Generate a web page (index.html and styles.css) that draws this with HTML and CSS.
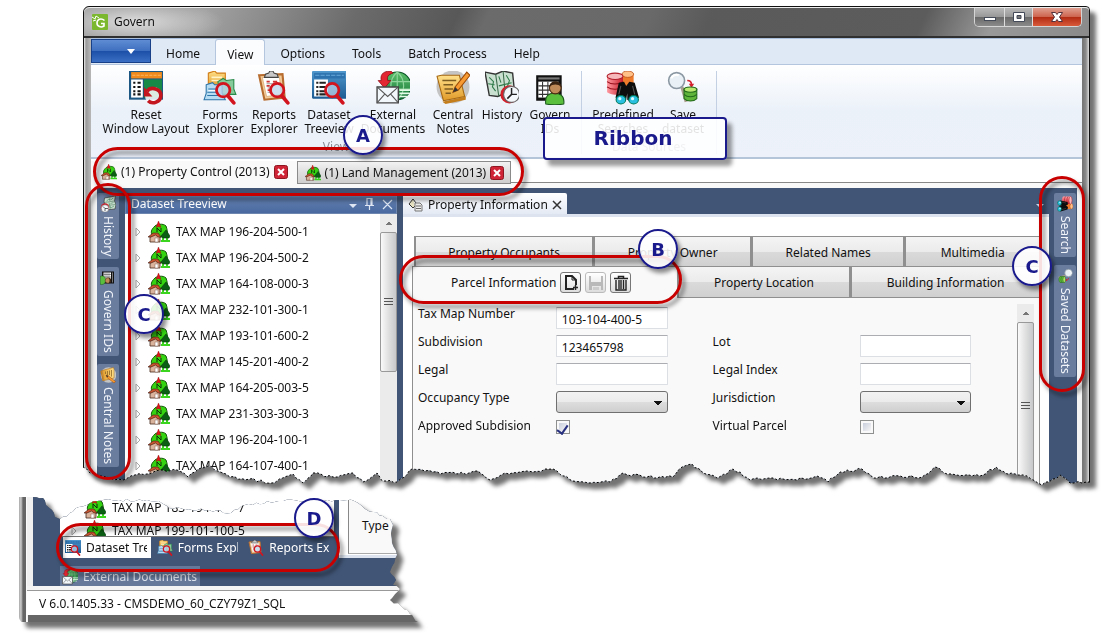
FILE: index.html
```html
<!DOCTYPE html>
<html lang="en">
<head>
<meta charset="utf-8">
<title>Govern</title>
<link rel="stylesheet" href="styles.css">
</head>
<body>
<svg class="defs" aria-hidden="true">
  <defs>
    <linearGradient id="gold" x1="0" y1="0" x2="0" y2="1"><stop offset="0" stop-color="#ffe08a"/><stop offset="1" stop-color="#e09a28"/></linearGradient>
    <linearGradient id="blue" x1="0" y1="0" x2="0" y2="1"><stop offset="0" stop-color="#4f97cc"/><stop offset="1" stop-color="#1c5b93"/></linearGradient>
    <linearGradient id="green" x1="0" y1="0" x2="0" y2="1"><stop offset="0" stop-color="#5cc06a"/><stop offset="1" stop-color="#14743a"/></linearGradient>
    <linearGradient id="redg" x1="0" y1="0" x2="1" y2="0"><stop offset="0" stop-color="#ff9aa2"/><stop offset="1" stop-color="#c8202c"/></linearGradient>
  </defs>
  <symbol id="i-lens" viewBox="0 0 32 32">
    <path d="M24 24l5 6" stroke="#d2141e" stroke-width="3.4" stroke-linecap="round"/>
    <circle cx="19" cy="18" r="6.3" fill="#bcd4ec" fill-opacity=".75" stroke="#d2141e" stroke-width="2.6"/>
  </symbol>
  <symbol id="i-reset" viewBox="0 0 32 32">
    <rect x="0" y="0" width="33" height="27" fill="#1c5683"/><rect x="2" y="1" width="29" height="6" fill="#f08a1c"/>
    <path d="M3 4h27" stroke="#fbb65e" stroke-dasharray="3 1"/><rect x="2" y="8" width="11" height="17" fill="#fff"/><rect x="14" y="8" width="17" height="17" fill="#178a48"/>
    <path d="M4 11h2m2 0h3M4 15h2m2 0h3M4 19h2m2 0h3M4 22h2m2 0h3" stroke="#111" stroke-width="2"/>
    <circle cx="23" cy="23" r="8" fill="#fff" fill-opacity=".85"/>
    <path d="M17 19c4-5 13-2 13 4s-8 9-12 5" fill="none" stroke="#c4161f" stroke-width="3.4"/><path d="M14 15v9h8z" fill="#c4161f"/>
  </symbol>
  <symbol id="i-forms" viewBox="0 0 32 32">
    <path d="M5 2l6-2 2 2h8v13H5z" fill="url(#gold)" stroke="#d07b12"/><path d="M8 6h10M8 9h10" stroke="#fff3c8" stroke-width="1.5"/>
    <path d="M14 10l5-3 3 2 7-1v9l2 5H16z" fill="#86c99a" stroke="#278a4a"/>
    <path d="M3 13l6-2 2 2h7v8l3 6H1l2-6z" fill="#b5dcf3" stroke="#2c73a8"/><path d="M5 17h9M4 20h11M4 23h12" stroke="#2c73a8"/><path d="M5 18.500h9" stroke="#fff"/>
    <use href="#i-lens"/>
  </symbol>
  <symbol id="i-reports" viewBox="0 0 32 32">
    <path d="M2 4l22-1 2 22-19 2z" fill="#f3cd9c" stroke="#b76d30" stroke-width="2"/><path d="M5 6l16-1 2 17-14 2z" fill="#fff" stroke="#d9a66d" stroke-width=".7"/>
    <path d="M7 6l1-3 3-1 1-2h3l1 2 3 1 1 3z" fill="#c8c8c8" stroke="#444"/><path d="M9 10h3m3 0h4M9 14h3M10 18h3" stroke="#c33" stroke-width="1.500"/><path d="M9 12h9M10 16h4M10 20h4" stroke="#999"/>
    <use href="#i-lens"/>
  </symbol>
  <symbol id="i-tree" viewBox="0 0 32 32">
    <rect x="0" y="0" width="33" height="26" rx="1" fill="url(#blue)"/><rect x="2" y="2" width="29" height="5" fill="#2d71ad"/><path d="M3 4h27" stroke="#68aadb" stroke-dasharray="4 1"/>
    <rect x="2" y="8" width="13" height="16" fill="#fff"/><path d="M4 11h2m1 0h6M4 15h2m1 0h6M4 19h2m1 0h6M4 22h2m1 0h6" stroke="#222" stroke-width="2"/>
    <use href="#i-lens"/>
  </symbol>
  <symbol id="i-ext" viewBox="0 0 32 32">
    <circle cx="20" cy="14" r="13" fill="url(#green)" stroke="#0a5528"/><path d="M20 1c-8 7-8 19 0 26 8-7 8-19 0-26zM8 10h24M7 17h26M20 1v26" fill="none" stroke="#8fd49c" stroke-width="1.100"/>
    <path d="M22 18h11M22 21h10M22 24h8" stroke="#e6fbe8" stroke-width="1.600"/>
    <path d="M14 0C5 0 4 5 5 9H2l6 7 6-7h-3c-1-4 1-6 5-7z" fill="#e22632" stroke="#8c0a14" stroke-width=".7"/>
    <path d="M1 15h20v15H1z" fill="#f2f7fb" stroke="#444" stroke-width="1.300"/><path d="M1 15l10 9 10-9M1 30l7-8M21 30l-7-8" fill="none" stroke="#555"/>
  </symbol>
  <symbol id="i-notes" viewBox="0 0 32 32">
    <circle cx="16" cy="15" r="15.500" fill="#c4c4c4"/>
    <path d="M1 5l4-1 17 0 5 20-20 4z" fill="url(#gold)" stroke="#a66812"/><path d="M6 29l22-5v3L9 31z" fill="#c47e1c"/>
    <path d="M6 9h13M7 13h9M8 17h8M9 21h5" stroke="#7d5c22" stroke-width="1.400"/>
    <path d="M29 1l3 3-11 14-5 2 2-5z" fill="#f79a31" stroke="#9c4b08"/><path d="M18 15l3 3-5 2z" fill="#333"/>
  </symbol>
  <symbol id="i-history" viewBox="0 0 32 32">
    <path d="M0 1l10 2 7-3 9 2 2 20-9-1-7 3-8-1z" fill="#c9dfcf" stroke="#333" stroke-width="1.300"/><path d="M10 3l3 21M17 0l2 21" stroke="#3b6b4a"/>
    <path d="M4 6l4 4-1 5 3 4M13 5l2 6M20 4l3 5-2 6M3 12l6 1M13 14l12-3" fill="none" stroke="#2e7a48"/>
    <circle cx="23" cy="22" r="8.500" fill="#d4202b"/><circle cx="25" cy="22" r="7.500" fill="#f4f8fb" stroke="#666"/><path d="M25 16v6h5M25 22l-4 4" fill="none" stroke="#222" stroke-width="1.400"/>
  </symbol>
  <symbol id="i-ids" viewBox="0 0 32 32">
    <path d="M3 4h24v24H3z" fill="#111"/><path d="M5 6h20v2H5z" fill="#777"/><path d="M5 10h19v15H5z" fill="#fff"/><path d="M5 14h19M5 18h19M5 22h19M9 10v15M14 10v15M19 10v15" stroke="#333"/>
    <path d="M12 31c-1-8 3-10 8-10s10 2 9 10c-4 1-13 1-17 0z" fill="#5bbf3e" stroke="#1c5a1c"/><circle cx="21" cy="16" r="5.500" fill="#bf8a58" stroke="#4a2a10"/><path d="M15.500 15c0-7 11-7 11 0-3-3-8-3-11 0z" fill="#3b2412"/>
  </symbol>
  <symbol id="i-search" viewBox="0 0 32 32">
    <path d="M15 3v12h11V3z" fill="#ee7c2c"/><ellipse cx="20.500" cy="3" rx="5.500" ry="3" fill="#ffc188" stroke="#b8480c" stroke-width=".7"/>
    <path d="M1 5v15c4 3 11 3 15 0V5z" fill="url(#redg)"/><ellipse cx="8.500" cy="5" rx="7.500" ry="3" fill="#f7b8bc" stroke="#b01c28"/><path d="M1 10c4 3 11 3 15 0M1 15c4 3 11 3 15 0" fill="none" stroke="#96101c"/>
    <path d="M12 11l5-1 2 4 3-4 5 1 4 14-6 5-5-3v-6l-1 6-6 4-4-6z" fill="#0d0d0d"/><path d="M14 14l-2 8m13-8l2 8" stroke="#555"/>
    <ellipse cx="14" cy="27" rx="4.500" ry="4" fill="#28bfe0" stroke="#075"/><ellipse cx="26" cy="27" rx="4.500" ry="4" fill="#28bfe0" stroke="#075"/><circle cx="13" cy="26" r="1.500" fill="#d9faff"/><circle cx="25" cy="26" r="1.500" fill="#d9faff"/>
  </symbol>
  <symbol id="i-save" viewBox="0 0 32 32">
    <path d="M15 15l4 14" stroke="#a89c8a" stroke-width="3"/><circle cx="10" cy="9" r="7.500" fill="#e9f1f6" stroke="#8b98a3" stroke-width="1.500"/><path d="M5 7c1-3 4-4 7-3" stroke="#fff" stroke-width="2" fill="none"/>
    <path d="M20 9c3 0 4 1 4 4" fill="none" stroke="#d4202b" stroke-width="1.500"/><path d="M21.500 12h5L24 16z" fill="#d4202b"/>
    <path d="M17 17v9c3 3 9 3 12 0v-9z" fill="#5fb53a" stroke="#236a1a"/><ellipse cx="23" cy="17.500" rx="6" ry="2.500" fill="#b8e86e" stroke="#236a1a"/><path d="M17 22c3 3 9 3 12 0" fill="none" stroke="#236a1a"/>
  </symbol>
  <symbol id="i-house" viewBox="0 0 22 22">
    <path d="M4 14C2 10 5 7 6 6c2-3 9-4 12-1 1 3 2 6 1 11H5z" fill="#35d411" stroke="#14570a"/>
    <path d="M10.500 0l2.500 6.500-2.500-1-2.500 1z" fill="#e3161b" stroke="#8c0a0a" stroke-width=".4"/><path d="M9 11V7l4 4V7" fill="none" stroke="#0b2e06" stroke-width="1"/>
    <path d="M15 15v6M19 14v7M13 20h9" stroke="#3bd520" stroke-width="2"/>
    <path d="M18 9l4 6-1 2h-6l-2-2z" fill="#0b5e14" stroke="#063c0d" stroke-width=".6"/>
    <path d="M2 16l5-3 5 3v5H2z" fill="#d9b39c" stroke="#462a1c" stroke-width=".8"/><path d="M0 16l5-4h5l3 4h-3l-2.500-2L3 16z" fill="#c8552f" stroke="#3d1a10" stroke-width=".6"/><path d="M7 17h3v4H7z" fill="#fff" stroke="#8c6a58" stroke-width=".5"/>
  </symbol>
  <symbol id="i-closered" viewBox="0 0 14 14"><rect x=".5" y=".5" width="13" height="13" rx="2" fill="#cf2436" stroke="#8d1620"/><path d="M4 4l6 6M10 4l-6 6" stroke="#fff" stroke-width="2"/></symbol>
  <symbol id="i-tri" viewBox="0 0 6 10"><path d="M1 1l4 4-4 4z" fill="#fff" stroke="#aaa"/></symbol>
</svg>

<figure class="shot main">
  <div class="shadow">
    <div class="window" data-tear="bottom">
      <header class="title">
        <svg class="logo" viewBox="0 0 16 16"><rect width="16" height="16" rx="1" fill="#7cb82f"/><path d="M0 3l3 2 1-3 3 2M1 7l3-1" stroke="#fff" fill="none"/><path d="M12.500 6.500C9 3.500 5 5.500 5 9s4 5 7 3V9.500H9" fill="none" stroke="#fff" stroke-width="1.600"/></svg>
        <h1>Govern</h1>
        <div class="caption">
          <button aria-label="Minimize"><svg viewBox="0 0 14 12"><rect x="1.500" y="6.500" width="11" height="3" fill="#fff" stroke="#444a58"/></svg></button>
          <button aria-label="Maximize"><svg viewBox="0 0 14 12"><path d="M1.500 1.500h11v9h-11z" fill="#fff" stroke="#444a58"/><path d="M5 4.500h4v3H5z" fill="#777" stroke="#444a58"/></svg></button>
          <button class="x" aria-label="Close"><svg viewBox="0 0 14 12"><path d="M1.500 1.500h4L7 3.500l1.500-2h4L9.500 6l3 4.500h-4L7 8.500l-1.500 2h-4l3-4.500z" fill="#fff" stroke="#54303a"/></svg></button>
        </div>
      </header>
      <div class="client">
        <nav class="menu">
          <button class="app" aria-label="Application menu"><svg viewBox="0 0 8 5"><path d="M0 0h8L4 5z" fill="#fff"/></svg></button>
          <button>Home</button><button class="on">View</button><button>Options</button><button>Tools</button><button>Batch Process</button><button>Help</button>
        </nav>
        <div class="ribbon">
          <section class="group views">
            <div class="tools">
              <button><svg><use href="#i-reset"/></svg>Reset<br>Window Layout</button>
              <button><svg><use href="#i-forms"/></svg>Forms<br>Explorer</button>
              <button><svg><use href="#i-reports"/></svg>Reports<br>Explorer</button>
              <button><svg><use href="#i-tree"/></svg>Dataset<br>Treeview</button>
              <button><svg><use href="#i-ext"/></svg>External<br>Documents</button>
              <button><svg><use href="#i-notes"/></svg>Central<br>Notes</button>
              <button><svg><use href="#i-history"/></svg>History</button>
              <button><svg><use href="#i-ids"/></svg>Govern<br>IDs</button>
            </div>
            <h2>View</h2>
          </section>
          <section class="group sources">
            <div class="tools">
              <button><svg><use href="#i-search"/></svg>Predefined<br>Searches</button>
              <button><svg><use href="#i-save"/></svg>Save<br>dataset</button>
            </div>
            <h2>Data Sources</h2>
          </section>
        </div>
        <div class="docs">
          <div class="doc on"><svg class="s16"><use href="#i-house"/></svg><span>(1) Property Control (2013)</span><button aria-label="Close tab"><svg><use href="#i-closered"/></svg></button></div>
          <div class="doc"><svg class="s16"><use href="#i-house"/></svg><span>(1) Land Management (2013)</span><button aria-label="Close tab"><svg><use href="#i-closered"/></svg></button></div>
        </div>
        <div class="work">
          <aside class="dock left">
            <button><svg><use href="#i-history"/></svg>History</button>
            <button><svg><use href="#i-ids"/></svg>Govern IDs</button>
            <button><svg><use href="#i-notes"/></svg>Central Notes</button>
          </aside>
          <section class="tree">
            <header><h2>Dataset Treeview</h2>
              <svg viewBox="0 0 44 14"><path d="M0 7h8l-4 4z" fill="#dfe7f5"/><path d="M18 1.500h5v7h-5zM22 2v6M16 8.500h9M20.500 9v4M34 3l9 9M43 3l-9 9" fill="none" stroke="#dfe7f5" stroke-width="1.200"/></svg></header>
            <div class="scroller">
              <ul>
                <li><svg class="tw"><use href="#i-tri"/></svg><svg class="s22"><use href="#i-house"/></svg>TAX MAP 196-204-500-1</li>
                <li><svg class="tw"><use href="#i-tri"/></svg><svg class="s22"><use href="#i-house"/></svg>TAX MAP 196-204-500-2</li>
                <li><svg class="tw"><use href="#i-tri"/></svg><svg class="s22"><use href="#i-house"/></svg>TAX MAP 164-108-000-3</li>
                <li><svg class="tw"><use href="#i-tri"/></svg><svg class="s22"><use href="#i-house"/></svg>TAX MAP 232-101-300-1</li>
                <li><svg class="tw"><use href="#i-tri"/></svg><svg class="s22"><use href="#i-house"/></svg>TAX MAP 193-101-600-2</li>
                <li><svg class="tw"><use href="#i-tri"/></svg><svg class="s22"><use href="#i-house"/></svg>TAX MAP 145-201-400-2</li>
                <li><svg class="tw"><use href="#i-tri"/></svg><svg class="s22"><use href="#i-house"/></svg>TAX MAP 164-205-003-5</li>
                <li><svg class="tw"><use href="#i-tri"/></svg><svg class="s22"><use href="#i-house"/></svg>TAX MAP 231-303-300-3</li>
                <li><svg class="tw"><use href="#i-tri"/></svg><svg class="s22"><use href="#i-house"/></svg>TAX MAP 196-204-100-1</li>
                <li><svg class="tw"><use href="#i-tri"/></svg><svg class="s22"><use href="#i-house"/></svg>TAX MAP 164-107-400-1</li>
              </ul>
              <div class="bar"><i class="up"></i><div class="thumb short"><i class="grip"></i></div></div>
            </div>
          </section>
          <section class="property">
            <header>
              <div class="ptab"><svg viewBox="0 0 16 14"><path d="M5 1L1 6l4 4 2-2M5 1l3 4" fill="#e8e4c4" stroke="#333"/><path d="M7 5h5l2 2v6H7z" fill="#eee" stroke="#777"/><path d="M8 8h5M8 10.500h5" stroke="#666"/></svg><h2>Property Information</h2><svg class="cx" viewBox="0 0 10 10"><path d="M1 1l8 8M9 1L1 9" stroke="#333" stroke-width="1.500"/></svg></div>
              <i class="drop"></i>
            </header>
            <div class="sheet">
              <div class="strip one"><button>Property Occupants</button><button>Property Owner</button><button>Related Names</button><button>Multimedia</button></div>
              <div class="strip two">
                <div class="current"><span>Parcel Information</span>
                  <button aria-label="New"><svg viewBox="0 0 16 16"><path d="M11 14H3V1h6l4 4v5" fill="none" stroke="#222" stroke-width="2"/><path d="M9 1v4h4" fill="none" stroke="#222"/><path d="M12.500 10v5M10 12.500h5" stroke="#222" stroke-width="1.500"/></svg></button>
                  <button class="off" aria-label="Save"><svg viewBox="0 0 16 16"><path d="M1 1h2v6h10V1h2v14h-2v-4H4v4H1z" fill="#b9b9b9"/><path d="M5 15v-3h6v3" fill="#ccc"/></svg></button>
                  <button aria-label="Delete"><svg viewBox="0 0 16 16"><path d="M1 3.500h14M5.500 3V1.500h5V3" fill="none" stroke="#222" stroke-width="1.500"/><path d="M3 5v10h10V5M6 5v9M8 5v9M10.500 5v9" fill="none" stroke="#222" stroke-width="1.400"/></svg></button>
                </div>
                <button>Property Location</button><button>Building Information</button>
              </div>
              <div class="panel">
                <form class="form">
                  <label for="tax">Tax Map Number</label><input id="tax" type="text" value="103-104-400-5"><i></i><i></i>
                  <label for="sub">Subdivision</label><input id="sub" type="text" value="123465798"><label for="lot">Lot</label><input id="lot" type="text">
                  <label for="legal">Legal</label><input id="legal" type="text"><label for="lidx">Legal Index</label><input id="lidx" type="text">
                  <label for="occ">Occupancy Type</label><select id="occ"><option></option></select><label for="jur">Jurisdiction</label><select id="jur"><option></option></select>
                  <label for="app">Approved Subdision</label><input id="app" type="checkbox" checked><label for="vir">Virtual Parcel</label><input id="vir" type="checkbox">
                </form>
                <div class="bar"><i class="up"></i><div class="thumb"><i class="grip"></i></div></div>
              </div>
            </div>
          </section>
          <aside class="dock right">
            <button><svg><use href="#i-search"/></svg>Search</button>
            <button><svg><use href="#i-save"/></svg>Saved Datasets</button>
          </aside>
        </div>
      </div>
    </div>
  </div>
  <div class="ring ring-a"></div><div class="ring ring-b"></div><div class="ring ring-c1"></div><div class="ring ring-c2"></div>
  <b class="dot dot-a">A</b><b class="dot dot-b">B</b><b class="dot dot-c1">C</b><b class="dot dot-c2">C</b>
  <figcaption class="plate">Ribbon</figcaption>
</figure>

<figure class="shot part">
  <div class="shadow">
    <div class="window low" data-tear="corner">
      <div class="lowwork">
        <div class="lowtree">
          <ul>
            <li><svg class="tw"></svg><svg class="s22"><use href="#i-house"/></svg>TAX MAP 183-194-400-7</li>
            <li><svg class="tw"><use href="#i-tri"/></svg><svg class="s22"><use href="#i-house"/></svg>TAX MAP 199-101-100-5</li>
          </ul>
          <nav>
            <button class="on"><svg class="s16"><use href="#i-tree"/></svg><span>Dataset Treeview</span></button>
            <button><svg class="s16"><use href="#i-forms"/></svg><span>Forms Explorer</span></button>
            <button><svg class="s16"><use href="#i-reports"/></svg><span>Reports Explorer</span></button>
          </nav>
        </div>
        <div class="lowpane"><div>Type</div></div>
        <div class="lowdock"><button><svg class="s16"><use href="#i-ext"/></svg>External Documents</button></div>
      </div>
      <footer>V 6.0.1405.33 - CMSDEMO_60_CZY79Z1_SQL</footer>
    </div>
  </div>
  <div class="ring ring-d"></div><b class="dot dot-d">D</b>
</figure>
<script src="tear.js"></script>
</body>
</html>
```

FILE: styles.css
```css
* { box-sizing: border-box; }
body { margin: 0; min-height: 100vh; background: #fff; color: #111; font: 12px/14px "Noto Sans", "Open Sans", sans-serif; }
button, input, select { font: inherit; color: inherit; margin: 0; }
button { border: 0; padding: 0; background: none; white-space: nowrap; }
h1, h2, ul, figure { margin: 0; padding: 0; font: inherit; }
ul { list-style: none; }
svg { flex: none; display: block; }
.defs { position: absolute; width: 0; height: 0; }
.s16 { width: 16px; height: 16px; }
.s22 { width: 22px; height: 22px; }

body { display: flex; flex-direction: column; gap: 7px; padding: 6px 0 8px; }
.shot { position: relative; }
.main { margin: 0 16px 0 83px; }
.shadow { filter: drop-shadow(6px 6px 2px rgba(0, 0, 0, .55)); position: relative; }
.window { border: 1px solid #111; border-radius: 6px 4px 0 0; padding: 0 7px 0 7px; background: linear-gradient(90deg, #eee 0, #999 2px, #b4b4b4 6px, #bbb 40%, #777 calc(100% - 6px), #8d8d8d calc(100% - 3px), #ddd 100%); }
.edge { position: absolute; inset: 0; width: 100%; height: 100%; overflow: visible; fill: none; stroke: #000; stroke-dasharray: 2 2; }

.title { display: flex; align-items: center; height: 31px; margin: 0 -7px; padding: 0 7px 0 8px; gap: 6px; border-top: 1px solid #eee; border-bottom: 2px solid #303030; border-radius: 6px 4px 0 0; background: radial-gradient(ellipse 90px 22px at 50px 14px, #ddd 0, rgba(200, 200, 200, 0) 100%), linear-gradient(115deg, #999 0, #a2a2a2 12%, #858585 20%, #6b6b6b 27%, #585858 37%, #6b6b6b 40%, #696969 56%, #5a5a5a 62%, #5c5c5c 83%, #999 90%, #8a8a8a 100%); }
.logo { width: 16px; height: 16px; }
.title h1 { flex: 1; }
.caption { display: flex; align-self: flex-start; border: 1px solid #d5d5d5; border-top: 0; border-radius: 0 0 5px 5px; overflow: hidden; }
.caption button { width: 30px; height: 18px; display: grid; place-items: center; border-right: 1px solid #ddd; background: linear-gradient(#b9b9b9, #999 48%, #686868 50%, #8a8a8a); }
.caption button + button { width: 28px; }
.caption button.x { width: 48px; border: 0; background: linear-gradient(#e0a090, #cd6550 48%, #b12a12 50%, #d8593a); }
.caption svg { width: 14px; height: 12px; }

.client { background: #fff; }
.menu { display: flex; align-items: flex-end; gap: 3px; height: 27px; background: #dfe8f5; border-top: 1px solid #a9bfdc; border-bottom: 1px solid #b4c6de; }
.menu button { height: 25px; padding: 4px 11px 0; border: 1px solid transparent; border-bottom: 0; }
.menu .on { height: 26px; margin-bottom: -1px; background: #fbfcfe; border-color: #b4c6de; border-radius: 3px 3px 0 0; }
.menu .app { width: 60px; height: 24px; align-self: flex-start; display: grid; place-items: center; padding: 0 0 0 20px; border: 1px solid #174089; background: linear-gradient(#5f8cd3, #3f70c0 48%, #1d50a8 52%, #3a6fc4); }
.app svg { width: 8px; height: 5px; }
.ribbon { display: flex; height: 94px; padding: 6px 0 3px 12px; background: linear-gradient(#fff, #ebf1f9 50%, #ecf1fa); border-bottom: 2px solid #b4c4d9; }
.group { display: grid; grid-template-rows: 1fr auto; padding-right: 12px; border-right: 1px solid #c3cfe2; }
.sources { padding: 0 11px; }
.tools { display: grid; gap: 8px; align-items: start; }
.views .tools { grid-template-columns: 86px 46px 46px 48px 64px 40px 42px 38px; }
.sources .tools { grid-template-columns: 60px 44px; }
.tools button { margin: 0 -10px; text-align: center; }
.tools button svg { width: 34px; height: 34px; margin: 0 auto 3px; overflow: visible; }
.group h2 { text-align: center; color: #8a8f98; }
.docs { display: flex; align-items: flex-start; height: 29px; padding-top: 2px; background: linear-gradient(#fff 23px, #888 23px, #888 24px, #f9f9f9 24px); }
.doc { display: flex; align-items: center; gap: 4px; height: 23px; padding: 1px 6px 0 7px; border: 1px solid #8a8a8a; background: linear-gradient(#f2f2f2, #dedede 50%, #cfcfcf); }
.doc.on { height: 25px; border: 0; padding: 0 9px 3px 10px; background: #f9f9f9; }
.doc button, .doc button svg { width: 14px; height: 14px; }

.work { display: flex; background: #415576; min-height: 301px; }
.dock { display: flex; flex-direction: column; align-items: flex-start; gap: 8px; padding-top: 5px; }
.dock.left { width: 34px; border-left: 6px solid #f4f4f4; }
.dock.right { width: 33px; padding-left: 5px; border-right: 5px solid #f4f4f4; }
.dock button { writing-mode: vertical-rl; display: flex; align-items: center; gap: 4px; width: 22px; padding: 3px 0 3px; line-height: 18px; color: #f2f5fa; background: #6a7d9f; border-radius: 2px; }
.dock svg { width: 16px; height: 16px; transform: rotate(90deg); }

.tree { width: 272px; flex: none; margin-top: 5px; display: flex; flex-direction: column; }
.tree header { display: flex; align-items: center; height: 21px; padding: 0 3px 0 5px; color: #fff; background: linear-gradient(#6683b0, #4a69a0); border: 1px solid #6d86b0; }
.tree header h2 { flex: 1; }
.tree header svg { width: 44px; height: 14px; }
.scroller { display: flex; flex: 1; background: #fff; }
.scroller ul { flex: 1; padding-top: 5px; }
li { display: flex; align-items: center; height: 26px; white-space: nowrap; }
.tw { width: 6px; height: 10px; margin: 0 7px 0 10px; }
li .s22 { margin-right: 6px; }
.bar { width: 17px; display: flex; flex-direction: column; background: #ebebeb; }
.up { height: 18px; background: conic-gradient(from 135deg at 50% 0, #777 90deg, transparent 0) center / 8px 4px no-repeat; }
.thumb { flex: 1; display: grid; place-items: center; border: 1px solid #999; border-radius: 2px; background: linear-gradient(90deg, #fafafa, #e0e0e0 50%, #c6c8ca); }
.short { flex: none; height: 140px; }
.grip { width: 9px; height: 8px; background: repeating-linear-gradient(#555 0 1px, transparent 1px 3px); }

.property { flex: 1; margin: 5px 0 0 6px; display: flex; flex-direction: column; min-width: 0; }
.property header { display: flex; justify-content: space-between; height: 21px; }
.ptab { display: flex; align-items: center; gap: 4px; padding: 2px 5px 0; background: linear-gradient(#fff, #e4eaf4); border-radius: 2px 2px 0 0; }
.ptab svg { width: 16px; height: 14px; }
.ptab .cx { width: 10px; height: 10px; }
.drop { align-self: center; margin: 4px 5px 0 0; border: 4px solid transparent; border-top-color: #cdd6e6; border-bottom: 0; }
.sheet { flex: 1; display: flex; flex-direction: column; padding: 19px 9px 0; background: #fff; border-top: 3px solid #dde4ef; }
.strip { display: grid; }
.strip > button { border: 1px solid #8f8f8f; border-left-width: 2px; background: linear-gradient(#f4f4f4, #ebebeb 50%, #dadada 51%, #d0d0d0); }
.one { grid-template-columns: 180fr 158fr 154fr 136fr; height: 30px; margin-left: 2px; }
.one > button { border-bottom: 0; padding-top: 2px; }
.two { grid-template-columns: 265fr 174fr 190fr; height: 32px; }
.two > button { padding-top: 2px; }
.current { display: flex; align-items: center; gap: 4px; padding: 0 0 0 38px; background: #f9f9f9; border: 1px solid #8f8f8f; border-bottom: 0; border-right: 0; white-space: nowrap; }
.current button { width: 21px; height: 21px; display: grid; place-items: center; border: 1px solid #777; border-radius: 3px; background: linear-gradient(#fff, #ddd); }
.current .off { border-color: #bbb; }
.current svg { width: 16px; height: 16px; }
.panel { flex: 1; display: flex; padding: 6px 5px 0 5px; background: #f9f9f9; border: solid #8f8f8f; border-width: 0 1px; }
.form { flex: 1; display: grid; grid-template-columns: minmax(100px, 138fr) minmax(60px, 112fr) minmax(100px, 193fr) minmax(60px, 111fr) 46fr; grid-auto-rows: 28px; align-content: start; padding-top: 2px; }
.form > :nth-child(4n+1) { grid-column: 1; }
.form > :nth-child(4n+3) { grid-column: 3; padding-left: 45px; }
.form label { line-height: 16px; white-space: nowrap; }
.form input[type=text], .form select { width: 100%; height: 22px; margin-top: 1px; padding: 3px 5px 0; background: #fff; border: 1px solid #dcdfe4; border-top-color: #abadb3; border-radius: 1px; }
.form select { appearance: none; border: 1px solid #707070; border-radius: 3px; background: conic-gradient(from -45deg at 50% 100%, #111 90deg, transparent 0) calc(100% - 5px) 55% / 8px 4px no-repeat, linear-gradient(#f2f2f2, #ebebeb 50%, #dddddd 51%, #cfcfcf); }
.form input[type=checkbox] { appearance: none; display: grid; place-items: center; width: 14px; height: 14px; margin-top: 2px; border: 1px solid #8e8f8f; background: linear-gradient(135deg, #c9cfdd, #f6f6f6) content-box #fff; padding: 2px; }
.form input:checked::after { content: ""; width: 5px; height: 9px; margin-bottom: 4px; border: solid #27317f; border-width: 0 2px 2px 0; transform: rotate(35deg); }

.ring { position: absolute; border: 3px solid #c80000; border-radius: 25px; filter: drop-shadow(3px 4px 2px rgba(0, 0, 0, .5)); }
.ring-a { left: 10px; top: 141px; width: 431px; height: 49px; }
.ring-b { left: 316px; top: 249px; width: 283px; height: 49px; }
.ring-c1 { left: 2px; top: 177px; width: 46px; height: 297px; }
.ring-c2 { right: 5px; top: 170px; width: 46px; height: 216px; }
.ring-d { left: 37px; top: 26px; width: 284px; height: 49px; }
.dot { position: absolute; width: 40px; height: 40px; display: grid; place-items: center; border: 2px solid #1a1a8c; border-radius: 50%; background: rgba(255, 255, 255, .88); color: #1a1a8c; font: bold 18px "DejaVu Sans", sans-serif; box-shadow: 3px 4px 4px rgba(0, 0, 0, .45); }
.dot-a { left: 260px; top: 109px; }
.dot-b { left: 555px; top: 223px; }
.dot-c1 { left: 41px; top: 288px; }
.dot-c2 { right: 38px; top: 240px; }
.dot-d { left: 275px; top: 1px; }
.plate { position: absolute; left: 460px; top: 111px; width: 184px; height: 43px; padding: 0 4px 2px 0; display: grid; place-items: center; border: 2px solid #1a1a8c; border-radius: 4px; background: rgba(255, 255, 255, .88); color: #1a1a8c; font: bold 20px "DejaVu Sans", sans-serif; box-shadow: 5px 6px 4px rgba(0, 0, 0, .4); }

.part { margin: 0 0 0 19px; width: 399px; }
.low { border: 0; border-radius: 0 0 0 6px; padding: 0 0 8px 8px; background: linear-gradient(90deg, #aaa 0, #ccc 2px, #666 4px, #666 7px, #fff 7px, #eee 9px, #666 9px); }
.lowwork { display: grid; grid-template-columns: 279px 1fr; grid-template-rows: 61px 28px; padding-left: 27px; border-left: 6px solid #f0f0f0; background: #415576; }
.lowtree { display: flex; flex-direction: column; margin-right: 5px; overflow: hidden; background: #fff; }
.lowtree ul { height: 40px; overflow: hidden; border-bottom: 1px solid #777; padding-left: 1px; }
.lowtree li:first-child { height: 21px; }
.lowtree nav { display: flex; background: #415576; gap: 4px; height: 21px; padding-left: 3px; }
.lowtree nav button { display: flex; align-items: center; gap: 5px; width: 88px; padding: 1px 4px 0 2px; overflow: hidden; color: #fff; }
.lowtree nav button span { overflow: hidden; text-align: left; flex: 1; }
.lowtree nav .on { background: #fff; color: #111; }
.lowpane { padding: 0 0 4px 9px; background: #fff; border-bottom: 3px solid #dde4ef; }
.lowpane div { height: 57px; padding: 22px 0 0 13px; border-left: 1px solid #888; border-bottom: 1px solid #aaa; background: #f9f9f9; }
.lowdock { grid-column: 1 / -1; padding-top: 8px; }
.lowdock button { display: flex; align-items: center; gap: 5px; height: 20px; padding: 2px 3px 0 2px; color: #dfe5ef; background: #66799b; }
.low footer { padding: 6px 12px 4px; border-top: 1px solid #999; background: #fff; box-shadow: 0 -4px #f4f4f4; margin-top: 4px; }
```

FILE: tear.js
```js
// Torn paper edges: anchor points in px, x measured on a design width of `w`.
const TEARS = {
  bottom: {
    w: 1007,
    start: [[0, 0], [1007, 0]],
    line: [[1007,476],[987,477],[977,469],[959,479],[944,470],[924,468],[913,461],[897,470],[864,468],[852,461],[839,471],[817,470],[790,472],[779,463],[757,466],[745,476],[734,470],[714,474],[690,472],[667,474],[650,463],[634,472],[620,467],[609,458],[599,461],[590,471],[560,471],[540,467],[527,476],[507,477],[490,475],[470,463],[450,466],[422,467],[407,474],[395,465],[374,468],[350,466],[329,463],[314,476],[300,475],[294,467],[280,476],[270,467],[250,471],[230,467],[220,477],[210,468],[189,477],[167,473],[147,471],[135,465],[125,460],[112,466],[105,471],[94,464],[80,464],[64,468],[52,469],[40,474],[27,472],[7,467],[0,461]]
  },
  corner: {
    w: 399,
    start: [[399, 125], [0, 125], [0, 0], [14, 0]],
    line: [[14,0],[24,1],[27,8],[33,13],[36,20],[41,22],[60,10],[78,4],[100,3],[140,4],[150,11],[190,13],[212,16],[226,8],[260,4],[329,3],[339,6],[346,12],[354,15],[371,22],[374,28],[372,36],[373,46],[378,58],[371,75],[377,83],[374,88],[381,92],[371,103],[383,110],[391,117],[399,125]]
  }
};

function roughen(points) {
  let seed = 7;
  const next = () => (seed = (seed * 73 + 41) % 997) / 997 - 0.5;
  const out = [];
  points.forEach(([x, y], i) => {
    out.push([x, y]);
    const to = points[i + 1];
    if (!to) return;
    const n = Math.round(Math.hypot(to[0] - x, to[1] - y) / 4);
    for (let k = 1; k < n; k++) {
      out.push([x + (to[0] - x) * k / n + next(), y + (to[1] - y) * k / n + next() * 3]);
    }
  });
  return out;
}

document.querySelectorAll('[data-tear]').forEach(el => {
  const tear = TEARS[el.dataset.tear];
  const line = roughen(tear.line);
  const pos = p => `${(p[0] / tear.w * 100).toFixed(2)}% ${p[1].toFixed(1)}px`;
  el.style.clipPath = `polygon(${tear.start.concat(line).map(pos).join(',')})`;
  if (el.dataset.tear !== 'bottom') return;
  const scale = el.offsetWidth / tear.w;
  el.insertAdjacentHTML('afterend', `<svg class="edge"><polyline points="${line.map(p => p[0] * scale + ',' + p[1]).join(' ')}"/></svg>`);
});
```
